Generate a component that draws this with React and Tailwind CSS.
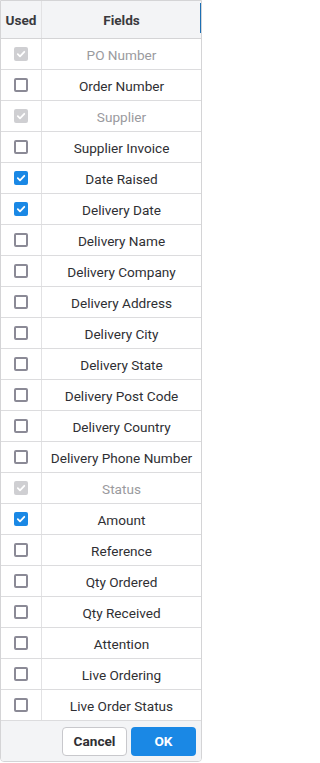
import React from "react";

const rows = [
  { name: "PO Number", state: "locked" },
  { name: "Order Number", state: "off" },
  { name: "Supplier", state: "locked" },
  { name: "Supplier Invoice", state: "off" },
  { name: "Date Raised", state: "on" },
  { name: "Delivery Date", state: "on" },
  { name: "Delivery Name", state: "off" },
  { name: "Delivery Company", state: "off" },
  { name: "Delivery Address", state: "off" },
  { name: "Delivery City", state: "off" },
  { name: "Delivery State", state: "off" },
  { name: "Delivery Post Code", state: "off" },
  { name: "Delivery Country", state: "off" },
  { name: "Delivery Phone Number", state: "off" },
  { name: "Status", state: "locked" },
  { name: "Amount", state: "on" },
  { name: "Reference", state: "off" },
  { name: "Qty Ordered", state: "off" },
  { name: "Qty Received", state: "off" },
  { name: "Attention", state: "off" },
  { name: "Live Ordering", state: "off" },
  { name: "Live Order Status", state: "off" },
];

function Check({ state }) {
  if (state === "off") {
    return <span className="block w-[14px] h-[14px] rounded-[2px] border-2 border-[#8b8a96] bg-white" />;
  }
  const bg = state === "on" ? "bg-[#1a88e5]" : "bg-[#cfcfd2]";
  return (
    <span className={`flex items-center justify-center w-[14px] h-[14px] rounded-[2px] ${bg}`}>
      <svg width="10" height="10" viewBox="0 0 10 10" fill="none">
        <path d="M1.8 5.2 L4 7.3 L8.3 2.8" stroke="white" strokeWidth="1.8" strokeLinecap="round" strokeLinejoin="round" />
      </svg>
    </span>
  );
}

export default function App() {
  return (
    <div className="w-[202px] h-[763px] bg-white" style={{ fontFamily: "Roboto, 'Liberation Sans', sans-serif" }}>
      <div className="w-[202px] border border-[#d4d4d6] rounded-b-[4px] overflow-hidden text-[13.6px] text-[#2f2f33]">
        {/* header */}
        <div className="relative flex h-[38px] bg-[#f3f4f6] border-b border-[#d4d4d6] font-bold text-[#3a3a3e]">
          <div className="w-[41px] shrink-0 flex items-center justify-center pt-[2px] border-r border-[#e2e2e4]">Used</div>
          <div className="flex-1 flex items-center justify-center pt-[2px]">Fields</div>
          <span className="absolute right-0 top-[2px] h-[30px] w-px bg-[#1d6fb3]" />
        </div>
        {/* rows */}
        {rows.map((r) => (
          <div key={r.name} className="flex h-[31px] border-b border-[#dcdcde]">
            <div className="w-[41px] shrink-0 flex items-center justify-center border-r border-[#e2e2e4]">
              <Check state={r.state} />
            </div>
            <div className={`flex-1 flex items-center justify-center pt-[2px] ${r.state === "locked" ? "text-[#9a9a9e]" : ""}`}>
              {r.name}
            </div>
          </div>
        ))}
        {/* footer */}
        <div className="flex items-center justify-end gap-[4px] h-[40px] pr-[5px] bg-[#f3f4f6]">
          <button className="w-[65px] h-[29px] rounded-[4px] border border-[#c8c8cc] bg-white font-bold text-[#2f2f33]">Cancel</button>
          <button className="w-[65px] h-[29px] rounded-[4px] bg-[#1a88e5] font-bold text-white">OK</button>
        </div>
      </div>
    </div>
  );
}
